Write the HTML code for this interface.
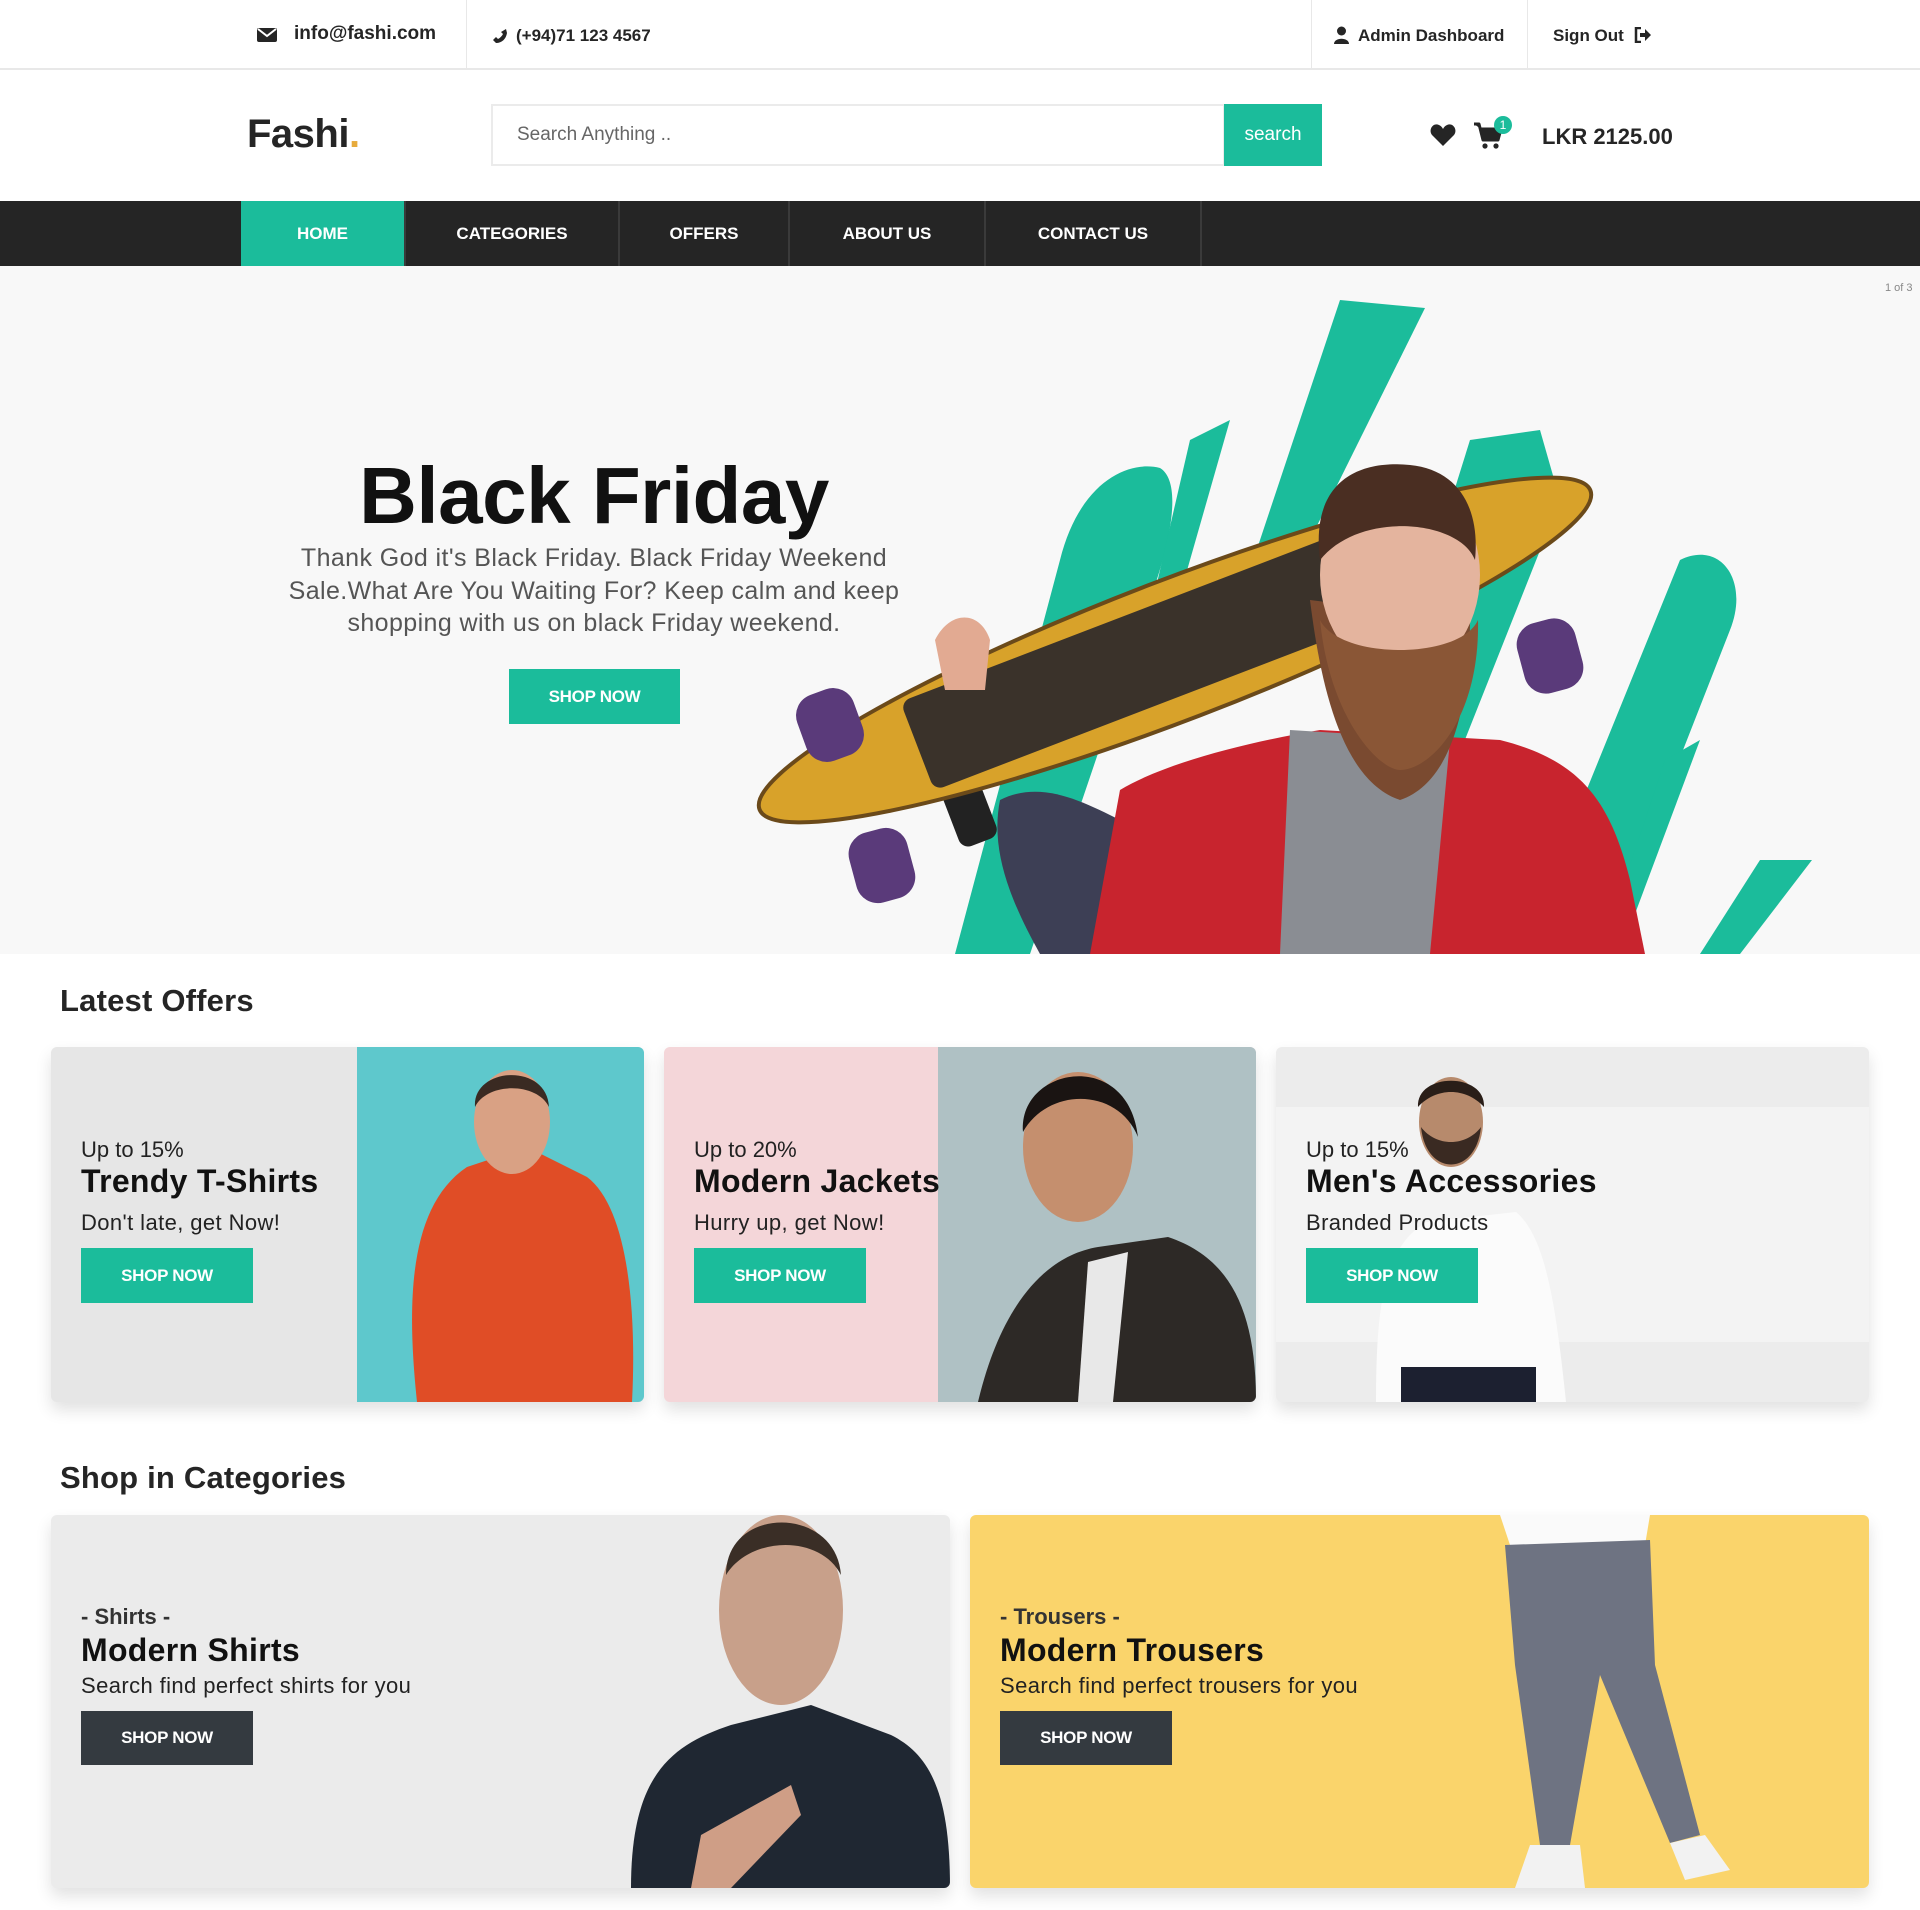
<!DOCTYPE html>
<html><head><meta charset="utf-8">
<style>
*{margin:0;padding:0;box-sizing:border-box}
body{width:1920px;height:1910px;position:relative;background:#fff;font-family:"Liberation Sans",sans-serif;color:#252525;overflow:hidden}
.a{position:absolute}
.top{font-size:18px;font-weight:bold;color:#252525;top:23px}
.nav a{position:absolute;top:0;height:65px;line-height:65px;text-align:center;color:#fff;font-weight:bold;font-size:17px;text-decoration:none;border-right:2px solid #3a3a3a}
.btn{position:absolute;background:#1bbc9b;color:#fff;font-weight:bold;font-size:17px;text-align:center;letter-spacing:-0.3px}
.card{position:absolute;overflow:hidden;border-radius:6px;box-shadow:0 8px 16px rgba(0,0,0,.12)}
.sub{font-size:22px;color:#222}
.tt{font-size:32px;font-weight:bold;color:#111;letter-spacing:0.3px}
.ds{font-size:22px;color:#222;letter-spacing:0.4px}
h2{position:absolute;font-size:31px;font-weight:bold;color:#252525;letter-spacing:0.2px}
</style></head><body>

<div class="a" style="left:0;top:68px;width:1920px;height:2px;background:#e8e8e8"></div>
<div class="a" style="left:466px;top:0;width:1px;height:68px;background:#e8e8e8"></div>
<div class="a" style="left:1311px;top:0;width:1px;height:68px;background:#e8e8e8"></div>
<div class="a" style="left:1527px;top:0;width:1px;height:68px;background:#e8e8e8"></div>
<svg class="a" style="left:257px;top:27px" width="20" height="16" viewBox="0 0 20 16"><rect x="0" y="1" width="20" height="14" rx="2" fill="#252525"/><path d="M1 2 L10 9 L19 2" stroke="#fff" stroke-width="2" fill="none"/></svg>
<div class="a top" style="left:294px;font-size:19px">info@fashi.com</div>
<svg class="a" style="left:492px;top:28px" width="16" height="16" viewBox="0 0 16 16"><path d="M14 1 L15 5 C14 11 10 15 4 15 L1 12 L4 9 L6 11 C8 10 10 8 11 6 L9 4 Z" fill="#252525"/></svg>
<div class="a top" style="left:516px;font-size:17px;top:26px">(+94)71 123 4567</div>
<svg class="a" style="left:1334px;top:26px" width="15" height="18" viewBox="0 0 15 18"><circle cx="7.5" cy="5" r="4.5" fill="#252525"/><path d="M0 18 C0 11 15 11 15 18Z" fill="#252525"/></svg>
<div class="a top" style="left:1358px;font-size:17px;top:26px">Admin Dashboard</div>
<div class="a top" style="left:1553px;font-size:17px;top:26px">Sign Out</div>
<svg class="a" style="left:1634px;top:27px" width="18" height="16" viewBox="0 0 18 16"><path d="M7 1 H2 V15 H7" stroke="#252525" stroke-width="2.5" fill="none"/><path d="M6 6 H11 V2 L17 8 L11 14 V10 H6Z" fill="#252525"/></svg>

<div class="a" style="left:247px;top:112px;font-size:40px;font-weight:bold;color:#252525;letter-spacing:-0.5px">Fashi<span style="color:#e7ab3c">.</span></div>
<div class="a" style="left:491px;top:104px;width:734px;height:62px;border:2px solid #ebebeb;background:#fff"></div>
<div class="a" style="left:517px;top:124px;font-size:19px;color:#666">Search Anything ..</div>
<div class="a" style="left:1224px;top:104px;width:98px;height:62px;background:#1bbc9b;color:#fff;font-size:19px;text-align:center;line-height:62px">search</div>
<svg class="a" style="left:1430px;top:123px" width="26" height="24" viewBox="0 0 26 24"><path d="M13 23 L2 12 C-2 7 3 -1 9 2 C11 3 12 4 13 6 C14 4 15 3 17 2 C23 -1 28 7 24 12Z" fill="#252525"/></svg>
<svg class="a" style="left:1474px;top:122px" width="30" height="28" viewBox="0 0 30 28"><path d="M0 2 H5 L9 18 H24 L27 7 H7" stroke="#252525" stroke-width="3" fill="#252525" stroke-linejoin="round"/><circle cx="11" cy="24" r="2.6" fill="#252525"/><circle cx="22" cy="24" r="2.6" fill="#252525"/></svg>
<div class="a" style="left:1494px;top:116px;width:18px;height:18px;border-radius:50%;background:#1bbc9b;color:#fff;font-size:12px;text-align:center;line-height:18px">1</div>
<div class="a" style="left:1542px;top:124px;font-size:22px;font-weight:bold;color:#252525">LKR 2125.00</div>

<div class="a nav" style="left:0;top:201px;width:1920px;height:65px;background:#252525">
<a style="left:241px;width:165px;background:#1bbc9b">HOME</a>
<a style="left:406px;width:214px">CATEGORIES</a>
<a style="left:620px;width:170px">OFFERS</a>
<a style="left:790px;width:196px">ABOUT US</a>
<a style="left:986px;width:216px">CONTACT US</a>
</div>

<div class="a" style="left:0;top:266px;width:1920px;height:688px;background:#f8f8f8;overflow:hidden">
<svg class="a" style="left:0;top:0" width="1920" height="688" viewBox="0 266 1920 688">
<g fill="#1bbc9b">
<path d="M1340 300 L1425 308 L1300 560 L1240 600Z"/>
<path d="M1060 560 C1080 480 1130 460 1160 468 C1180 480 1175 530 1150 600 L1030 954 L955 954Z"/>
<path d="M1470 440 L1540 430 L1560 500 L1380 954 L1310 954Z"/>
<path d="M1680 560 C1720 540 1750 580 1730 630 L1640 860 L1560 954 L1520 954Z"/>
<path d="M1760 860 L1812 860 L1740 954 L1700 954Z"/>
<path d="M1190 440 L1230 420 L1150 700 L1130 700Z"/>
<path d="M1665 760 L1700 740 L1620 954 L1600 954Z"/>
</g>
<g transform="rotate(-21 1175 650)">
<rect x="905" y="680" width="40" height="80" rx="10" fill="#222"/>
<ellipse cx="1175" cy="650" rx="445" ry="70" fill="#d8a22a"/>
<ellipse cx="1175" cy="650" rx="445" ry="70" fill="none" stroke="#6b4a1a" stroke-width="4"/>
<rect x="900" y="600" width="500" height="95" rx="10" fill="#1f1f2a" opacity=".85"/>
</g>
<rect x="800" y="690" width="60" height="70" rx="22" fill="#5a3a7a" transform="rotate(-20 830 725)"/>
<rect x="852" y="830" width="60" height="72" rx="22" fill="#5a3a7a" transform="rotate(-15 880 866)"/>
<rect x="1520" y="620" width="60" height="72" rx="22" fill="#5a3a7a" transform="rotate(-15 1550 656)"/>
<path d="M1000 800 C1040 780 1080 800 1120 820 L1170 954 L1040 954 C1010 900 990 850 1000 800Z" fill="#3d3f55"/>
<path d="M1120 790 C1170 760 1260 740 1320 730 L1500 740 C1580 760 1610 800 1630 880 L1645 954 L1090 954Z" fill="#c8242e"/>
<path d="M1290 730 L1450 740 L1430 954 L1280 954Z" fill="#8a8d93"/>
<path d="M1310 600 C1320 680 1340 780 1400 800 C1460 780 1470 680 1470 620 Z" fill="#7a4a30"/>
<ellipse cx="1400" cy="575" rx="80" ry="100" fill="#e4b49e"/>
<path d="M1320 560 C1310 480 1360 460 1410 465 C1460 470 1480 510 1475 560 C1460 520 1360 510 1320 560Z" fill="#4a2e22"/>
<path d="M1320 620 C1330 720 1380 770 1400 770 C1430 770 1480 720 1478 620 C1460 660 1340 660 1320 620Z" fill="#8a5636"/>
<path d="M935 640 C950 610 980 610 990 640 L985 690 L945 690Z" fill="#e2aa92"/>
</svg>
<div class="a" style="left:1885px;top:16px;font-size:11px;color:#888">1 of 3</div>
</div>
<div class="a" style="left:262px;top:450px;width:664px;text-align:center;font-size:80px;font-weight:bold;color:#111;letter-spacing:-0.5px">Black Friday</div>
<div class="a" style="left:262px;top:542px;width:664px;text-align:center;font-size:25px;line-height:32.5px;color:#555;letter-spacing:0.4px">Thank God it's Black Friday. Black Friday Weekend Sale.What Are You Waiting For? Keep calm and keep shopping with us on black Friday weekend.</div>
<div class="btn" style="left:509px;top:669px;width:171px;height:55px;line-height:55px">SHOP NOW</div>

<h2 style="left:60px;top:983px">Latest Offers</h2>

<div class="card" style="left:51px;top:1047px;width:593px;height:355px;background:#e6e6e6">
<div class="a" style="left:306px;top:0;width:287px;height:355px;background:#5ec8cc"></div>
<svg class="a" style="left:306px;top:0" width="287" height="355"><path d="M60 355 C50 260 50 160 110 120 L170 100 L230 130 C270 160 280 260 275 355Z" fill="#e04d26"/><ellipse cx="155" cy="75" rx="38" ry="52" fill="#d9a184"/><path d="M118 60 C115 20 190 15 192 60 C180 35 130 35 118 60Z" fill="#3a2a22"/></svg>
<div class="a sub" style="left:30px;top:90px">Up to 15%</div>
<div class="a tt" style="left:30px;top:116px">Trendy T-Shirts</div>
<div class="a ds" style="left:30px;top:163px">Don't late, get Now!</div>
<div class="btn" style="left:30px;top:201px;width:172px;height:55px;line-height:55px">SHOP NOW</div>
</div>

<div class="card" style="left:664px;top:1047px;width:592px;height:355px;background:#f4d6d9">
<div class="a" style="left:274px;top:0;width:318px;height:355px;background:#afc1c4"></div>
<svg class="a" style="left:274px;top:0" width="318" height="355"><path d="M40 355 C60 270 100 210 160 200 L230 190 C290 210 318 260 318 355Z" fill="#2d2926"/><path d="M150 215 L190 205 L175 355 L140 355Z" fill="#e8e8e8"/><ellipse cx="140" cy="100" rx="55" ry="75" fill="#c58f6e"/><path d="M85 85 C80 20 190 0 200 90 C180 40 110 40 85 85Z" fill="#1a1412"/></svg>
<div class="a sub" style="left:30px;top:90px">Up to 20%</div>
<div class="a tt" style="left:30px;top:116px">Modern Jackets</div>
<div class="a ds" style="left:30px;top:163px">Hurry up, get Now!</div>
<div class="btn" style="left:30px;top:201px;width:172px;height:55px;line-height:55px">SHOP NOW</div>
</div>

<div class="card" style="left:1276px;top:1047px;width:593px;height:355px;background:#ececec">
<div class="a" style="left:0;top:60px;width:593px;height:235px;background:#f3f3f3"></div>
<svg class="a" style="left:0;top:0" width="593" height="355"><path d="M100 355 C100 250 110 200 150 175 L240 165 C270 190 280 260 290 355Z" fill="#fbfbfb"/><path d="M125 320 H260 V355 H125Z" fill="#1c2030"/><ellipse cx="175" cy="75" rx="32" ry="45" fill="#b78a6c"/><path d="M145 80 C150 130 200 130 205 80 C190 100 160 100 145 80Z" fill="#3a2a22"/><path d="M142 60 C140 25 210 25 208 60 C190 40 160 40 142 60Z" fill="#2a1e18"/></svg>
<div class="a sub" style="left:30px;top:90px">Up to 15%</div>
<div class="a tt" style="left:30px;top:116px">Men's Accessories</div>
<div class="a ds" style="left:30px;top:163px">Branded Products</div>
<div class="btn" style="left:30px;top:201px;width:172px;height:55px;line-height:55px">SHOP NOW</div>
</div>

<h2 style="left:60px;top:1460px">Shop in Categories</h2>

<div class="card" style="left:51px;top:1515px;width:899px;height:373px;background:#ebebeb">
<svg class="a" style="left:580px;top:0" width="319" height="373"><path d="M0 373 C0 260 40 230 100 210 L180 190 L260 220 C300 240 319 280 319 373Z" fill="#1f2732"/><ellipse cx="150" cy="95" rx="62" ry="95" fill="#c8a08a"/><path d="M95 60 C95 -10 205 -10 210 60 C190 20 120 20 95 60Z" fill="#3a2e26"/><path d="M70 320 L160 270 L170 300 L100 373 L60 373Z" fill="#cf9e86"/></svg>
<div class="a" style="left:30px;top:89px;font-size:22px;font-weight:bold;color:#333">- Shirts -</div>
<div class="a tt" style="left:30px;top:117px">Modern Shirts</div>
<div class="a ds" style="left:30px;top:158px">Search find perfect shirts for you</div>
<div class="btn" style="left:30px;top:196px;width:172px;height:54px;line-height:54px;background:#343a40">SHOP NOW</div>
</div>

<div class="card" style="left:970px;top:1515px;width:899px;height:373px;background:#fad46b">
<svg class="a" style="left:500px;top:0" width="399" height="373"><path d="M30 0 H180 L175 30 C140 35 80 35 40 30Z" fill="#fafafa"/><path d="M35 30 L180 25 L185 150 L230 320 L200 328 L130 160 L100 330 L70 330 L45 150Z" fill="#6e7382"/><path d="M60 330 L110 330 L115 373 L45 373Z" fill="#f2f2f2"/><path d="M200 328 L235 320 L260 355 L215 365Z" fill="#f2f2f2"/></svg>
<div class="a" style="left:30px;top:89px;font-size:22px;font-weight:bold;color:#333">- Trousers -</div>
<div class="a tt" style="left:30px;top:117px">Modern Trousers</div>
<div class="a ds" style="left:30px;top:158px">Search find perfect trousers for you</div>
<div class="btn" style="left:30px;top:196px;width:172px;height:54px;line-height:54px;background:#343a40">SHOP NOW</div>
</div>

</body></html>
